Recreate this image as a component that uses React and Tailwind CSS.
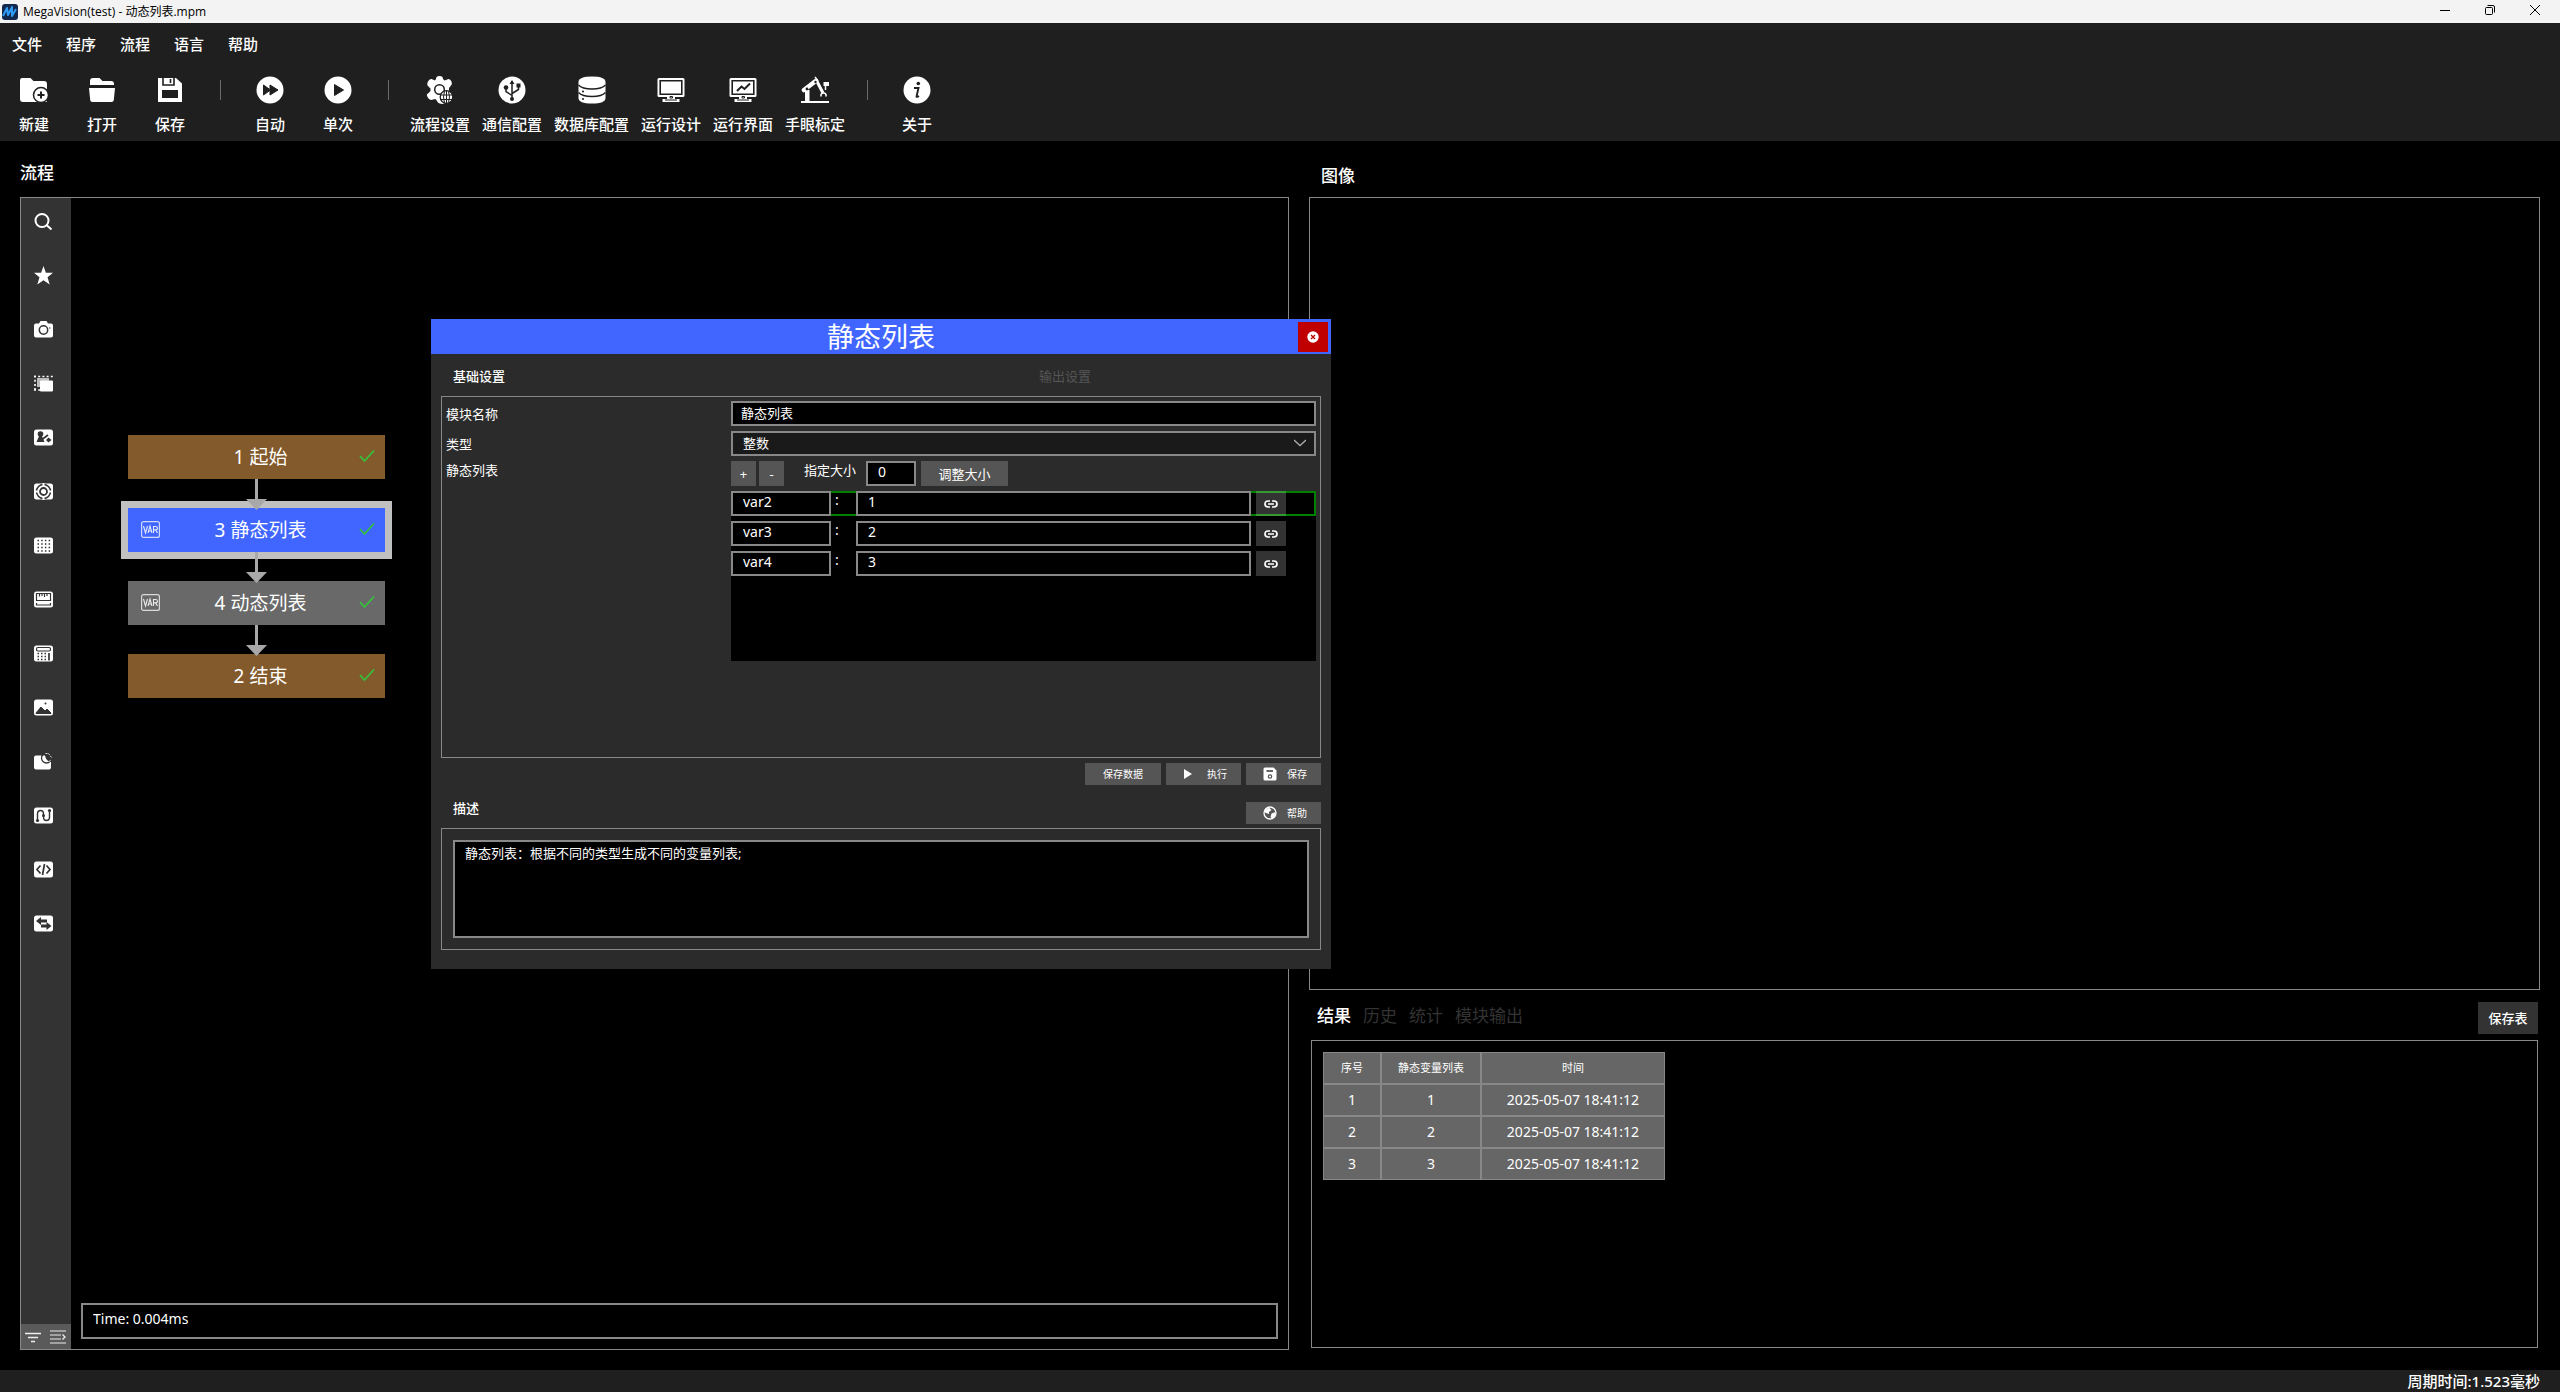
import React, { useState } from 'react';

const Svg = ({ w = 28, h = 28, box, className, children }) => (
  <svg width={w} height={h} viewBox={box || `0 0 ${w} ${h}`} fill="none" className={className} aria-hidden="true">
    {children}
  </svg>
);

// ---- toolbar icons, 28 x 28 ----
const DARK = '#1f1f1f';

const NewIcon = () => (
  <Svg>
    <path d="M2 2h8.500l3 3H24q3 0 3 3v17q0 1-1 1H3q-3 0-3-3V5q0-3 2-3z" fill="#fff" />
    <circle cx="21" cy="19" r="7.500" fill="#fff" stroke={DARK} strokeWidth="1.500" />
    <path d="M21 15.500v7M17.500 19h7" stroke={DARK} strokeWidth="2" />
  </Svg>
);

const OpenIcon = () => (
  <Svg>
    <path d="M2 9V5q0-3 3-3h6.500l3 3H23q3 0 3 3v1z" fill="#fff" />
    <path d="M1 12h26l-1.200 12q-.2 2-2.200 2H4.400q-2 0-2.200-2z" fill="#fff" />
  </Svg>
);

const SaveIcon = () => (
  <Svg>
    <path d="M2 2h18l6 5.500V26H2z" fill="#fff" />
    <path d="M7 2v7h11V2M14.500 3v4" stroke={DARK} strokeWidth="1.600" />
    <path d="M6 14h16v8H6z" fill={DARK} />
  </Svg>
);

const AutoIcon = () => (
  <Svg>
    <circle cx="14" cy="14" r="13.500" fill="#fff" />
    <path d="M7.500 9l7 5-7 5zM14 9l8 5-8 5z" fill={DARK} stroke={DARK} strokeLinejoin="round" />
  </Svg>
);

const OnceIcon = () => (
  <Svg>
    <circle cx="14" cy="14" r="13.500" fill="#fff" />
    <path d="M10.500 8.500l9 5.500-9 5.500z" fill={DARK} stroke={DARK} strokeLinejoin="round" />
  </Svg>
);

const GearIcon = () => (
  <Svg>
    <path d="M10 3q0-3 3.500-3T17 3l1.500 1.500 4-1.500q2 0 3 2.500t-.5 4L23 12v3l3 2-2 7-7 4q-5 0-6-3l-1.500-2L5 24q-2 0-3.500-3T2 17.500L4.500 15v-2.500L2 10q-1.500-1.500 0-4.500T5.500 3L9 4.500z" fill="#fff" />
    <circle cx="13.500" cy="13.500" r="4.800" stroke={DARK} strokeWidth="1.500" />
    <circle cx="20.500" cy="21" r="6.300" fill="#fff" stroke={DARK} strokeWidth="1.300" />
    <path d="M14.500 19h12M14.500 23.500h12M20.500 15v12M18.500 15.500q-2 5.500 0 11M22.500 15.500q2 5.500 0 11" stroke={DARK} strokeWidth="1" />
  </Svg>
);

const UsbIcon = () => (
  <Svg>
    <circle cx="14" cy="14" r="13.500" fill="#fff" />
    <path d="M14 5v18M14 19.500l-6-4V11M14 17.500l6.500-4V9" stroke={DARK} strokeWidth="1.500" />
    <path d="M11.500 8L14 4l2.500 4zM18.500 7.500h4v4h-4z" fill={DARK} />
    <circle cx="8" cy="11.500" r="2.300" fill={DARK} />
    <circle cx="14" cy="23" r="2" fill={DARK} />
  </Svg>
);

const DatabaseIcon = () => (
  <Svg>
    <path d="M.5 6q0-5.500 13.500-5.500T27.500 6v16q0 5.500-13.500 5.500T.5 22z" fill="#fff" />
    <path d="M.5 9q3.500 4 13.500 4t13.500-4M.5 16.500q3.500 4 13.500 4t13.500-4" stroke={DARK} strokeWidth="1.500" />
    <path d="M4 15.500h2M4 23h2" stroke={DARK} strokeWidth="1.500" />
  </Svg>
);

const Screen = ({ children }) => (
  <Svg>
    <path d="M2 2h24q1.500 0 1.500 1.500v16Q27.500 21 26 21H2Q.5 21 .5 19.500v-16Q.5 2 2 2z" fill="#fff" />
    <path d="M3.200 4.700h21.600v13.600H3.200z" stroke={DARK} strokeWidth="1.600" />
    <path d="M10 21h8v2h4.500v3h-17v-3H10z" fill="#fff" />
    <path d="M13 20.500h2.500V22H13zM8 24h12" stroke={DARK} strokeWidth="1" />
    {children}
  </Svg>
);

const DesignIcon = () => <Screen />;

const RuntimeIcon = () => (
  <Screen>
    <path d="M8 15l4.500-4.500 3 2.500L21 7.500" stroke={DARK} strokeWidth="2" />
  </Screen>
);

const RobotIcon = () => (
  <Svg>
    <path d="M0 26h28" stroke="#fff" strokeWidth="2" />
    <path d="M4 25V14h4.500v11z" fill="#fff" />
    <path d="M3 14L14 5.500" stroke="#fff" strokeWidth="4.500" strokeLinecap="round" />
    <path d="M15 3.500L22 17" stroke="#fff" strokeWidth="3" />
    <path d="M14 1l3 4M24.500 9v5" stroke="#fff" strokeWidth="1.500" />
    <path d="M22.500 6h5.500v4h-5.500z" fill="#fff" />
    <path d="M20 20.500q-.5-3.500 2.500-3.500t2.500 3.500" stroke="#fff" strokeWidth="1.600" />
    <circle cx="6" cy="13" r="1.400" fill={DARK} />
    <circle cx="14.500" cy="6" r="1.200" fill={DARK} />
  </Svg>
);

const AboutIcon = () => (
  <Svg>
    <circle cx="14" cy="14" r="13.500" fill="#fff" />
    <circle cx="15.300" cy="7.500" r="1.800" fill={DARK} />
    <path d="M11 12h4.500l-2 8.500q0 1 2.500-.5" stroke={DARK} strokeWidth="1.900" />
  </Svg>
);

// ---- tool strip icons, 19 x 17 ----
const INK = '#333';
const Card = () => <rect width="19" height="16" y=".5" rx="2.500" fill="#fff" />;

const stripIcons = [
  { name: '搜索', art: <><circle cx="8" cy="7.500" r="6.500" stroke="#fff" strokeWidth="2" /><path d="M12.500 12l5 4.500" stroke="#fff" strokeWidth="2" /></> },
  { name: '收藏', art: <path d="M9.500-1l2.400 6.800H19l-5.500 4.500 2.200 7.200-6.200-4.300-6.200 4.300 2.200-7.200L0 5.800h7.100z" fill="#fff" /> },
  { name: '相机', art: <><path d="M6.500 0h6L14 2.500h3q2 0 2 2v10q0 2-2 2H2q-2 0-2-2v-10q0-2 2-2h3z" fill="#fff" /><circle cx="9.500" cy="9" r="4.200" stroke={INK} strokeWidth="1.500" /><path d="M15 7h1.500" stroke={INK} /></> },
  { name: '区域', art: <><path d="M0 1.500h19M0 15h6M1 .5v16" stroke="#fff" strokeWidth="1.600" strokeDasharray="2 2.200" /><rect x="3" y="3" width="12" height="9" fill="#bbb" /><rect x="6" y="5.500" width="13" height="11" rx="1" fill="#fff" /></> },
  { name: '标定', art: <><Card /><circle cx="6.500" cy="5" r="2.800" fill={INK} /><path d="M5.500 6h2l3 7h-8zM14.500 8.500l3 2.500-3 2.500-2.500-2.500z" fill={INK} /><path d="M8 10.500l6-4.500" stroke={INK} strokeWidth="1.600" /></> },
  { name: '定位', art: <><Card /><circle cx="9.500" cy="8.500" r="7" stroke={INK} strokeWidth="1.600" /><circle cx="9.500" cy="8.500" r="3.500" stroke={INK} strokeWidth="1.800" /><path d="M9.500 0v4M9.500 13v4M1 8.500h4M14 8.500h4" stroke="#fff" strokeWidth="2" /></> },
  { name: '网格', art: <><Card /><path d="M3.500 3.500h13M3.500 7h13M3.500 10.500h13M3.500 14h13" stroke={INK} strokeWidth="1.500" strokeDasharray="1.500 2.200" /></> },
  { name: '测量', art: <><Card /><path d="M2.500 2.500h14v7h-14zM2.500 12v2h14v-2" stroke={INK} strokeWidth="1.200" /><path d="M5.500 3v2.500M8 3v2M10.500 3v3M13 3v2" stroke={INK} strokeWidth="1.200" /></> },
  { name: '计算', art: <><Card /><rect x="2.500" y="2.500" width="14" height="3.500" rx="1.500" stroke={INK} strokeWidth="1.200" /><path d="M3.500 8.500h9M3.500 11.500h9M3.500 14.500h9" stroke={INK} strokeWidth="1.500" strokeDasharray="1.500 2" /><path d="M15 8v7.500" stroke={INK} strokeWidth="1.700" /></> },
  { name: '图像', art: <><Card /><path d="M2 14l5-6 4 4 2-2 4 4v.5H2z" fill={INK} stroke={INK} strokeLinejoin="round" /><circle cx="11.500" cy="4.500" r="1" fill={INK} /></> },
  { name: '轮廓', art: <><path d="M2 2.500h9q1 6 6 6v6q0 2-2 2H2q-2 0-2-2v-10q0-2 2-2z" fill="#fff" /><circle cx="12.500" cy="5" r="5" stroke={INK} strokeWidth="1.300" /><path d="M11.500.5h3l3.500 4.500M15 8.500l2-1.500" stroke="#ddd" strokeWidth="1" strokeDasharray="2 1" /></> },
  { name: '路径', art: <><Card /><path d="M3.500 13.500V7q0-3.500 3-3.500t3 3.500v3q0 3.500 3 3.500t3-3.500V4" stroke={INK} strokeWidth="1.400" /><circle cx="3.500" cy="13.500" r="1.600" fill={INK} /><circle cx="9.500" cy="8.500" r="1.500" fill={INK} /><circle cx="15.500" cy="3.500" r="1.600" fill={INK} /></> },
  { name: '脚本', art: <><Card /><path d="M6.500 4.500L3 8.500l3.500 4M12.500 4.500l3.500 4-3.500 4M10.500 3l-2 11" stroke={INK} strokeWidth="1.700" /></> },
  { name: '通讯', art: <><Card /><path d="M2 6l5-4v2.500h6v3H7V10zM17.500 11l-5-4v2.500H7v3h5.500V15z" fill={INK} /></> },
];

const menus = ['文件', '程序', '流程', '语言', '帮助'];

const tools = [
  ['新建', NewIcon], ['打开', OpenIcon], ['保存', SaveIcon], null,
  ['自动', AutoIcon], ['单次', OnceIcon], null,
  ['流程设置', GearIcon], ['通信配置', UsbIcon], ['数据库配置', DatabaseIcon],
  ['运行设计', DesignIcon], ['运行界面', RuntimeIcon], ['手眼标定', RobotIcon], null,
  ['关于', AboutIcon],
];

const nodes = [
  { id: 1, name: '起始', color: 'bg-[#835a2c]' },
  { id: 3, name: '静态列表', color: 'bg-[#4066ff]', isVar: true, selected: true },
  { id: 4, name: '动态列表', color: 'bg-[#696969]', isVar: true },
  { id: 2, name: '结束', color: 'bg-[#835a2c]' },
];

const results = [1, 2, 3].map((n) => [n, n, '2025-05-07 18:41:12']);

const TitleBar = () => (
  <div className="flex h-[23px] shrink-0 items-center bg-[#f3f3f3] pl-0.5 pr-[3px] text-black">
    <Svg w={16} h={16}>
      <rect width="16" height="16" rx="3" fill="#12284c" />
      <path d="M1 12L5 4l1 7 4-8v9l4-7" stroke="#2f9bf5" strokeWidth="2" strokeLinejoin="round" />
    </Svg>
    <h1 className="ml-[5px] grow font-['Open_Sans','Noto_Sans_CJK_SC',sans-serif] text-xs">MegaVision(test) - 动态列表.mpm</h1>
    <div className="flex h-5 self-start">
      <button aria-label="最小化" className="flex w-[45px] items-center justify-center">
        <Svg w={10} h={10}><path d="M0 5.500h10" stroke="#000" /></Svg>
      </button>
      <button aria-label="还原" className="flex w-[45px] items-center justify-center">
        <Svg w={10} h={10}><rect x=".5" y="2.500" width="7" height="7" rx="1" stroke="#000" /><path d="M2.500.5H8q1.500 0 1.500 1.500v5.500" stroke="#000" /></Svg>
      </button>
      <button aria-label="关闭" className="flex w-[45px] items-center justify-center">
        <Svg w={10} h={10}><path d="M0 0l10 10M10 0L0 10" stroke="#000" /></Svg>
      </button>
    </div>
  </div>
);

const Header = () => (
  <header className="shrink-0 bg-[#1f1f1f] text-[15px] font-medium">
    <nav className="flex h-[45px] items-center gap-6 pb-0.5 pl-3">
      {menus.map((m) => <button key={m}>{m}</button>)}
    </nav>
    <div className="flex h-[73px] pt-2">
      {tools.map((tool, i) => {
        if (!tool) {
          return (
            <span key={i} className="flex w-8 justify-center pt-1">
              <span className="h-5 w-px bg-[#6a6a6a]" />
            </span>
          );
        }
        const [label, Icon] = tool;
        return (
          <button key={label} className="flex min-w-[68px] flex-col items-center gap-2 px-1.5">
            <Icon />
            <span className="leading-6">{label}</span>
          </button>
        );
      })}
    </div>
  </header>
);

const ToolStrip = () => (
  <div className="flex w-[50px] shrink-0 flex-col bg-[#333]">
    <div className="flex grow flex-col gap-2">
      {stripIcons.map((icon) => (
        <button key={icon.name} aria-label={icon.name} className="flex h-[46px] items-center pl-[13px]">
          <Svg w={19} h={17} className="overflow-visible">{icon.art}</Svg>
        </button>
      ))}
    </div>
    <div className="flex h-[25px] bg-[#5a5a5a]">
      <button aria-label="筛选" className="flex flex-1 items-center pl-1">
        <Svg w={16} h={12}><path d="M0 2.500h16M3 6.500h10M6 10.500h4" stroke="#eee" strokeWidth="1.600" /></Svg>
      </button>
      <button aria-label="展开" className="flex flex-1 items-center pl-1">
        <Svg w={16} h={14}><path d="M0 1h16M0 5h11M0 9h11M0 13h16" stroke="#bbb" strokeWidth="1.500" /><path d="M12.500 4.500L15 7l-2.500 2.500" stroke="#eee" strokeWidth="1.300" /></Svg>
      </button>
    </div>
  </div>
);

const FlowNode = ({ node, last }) => (
  <div className={`relative flex h-11 w-[257px] items-center justify-center pl-2 text-[19px] ${node.color} ${node.selected ? 'ring-[7px] ring-[#c0c0c0]' : ''}`}>
    {node.isVar && (
      <Svg w={19} h={17} className="absolute left-[13px] top-[13px]">
        <rect x=".6" y=".6" width="17.800" height="15.800" rx="2" stroke="#fff" strokeOpacity=".75" strokeWidth="1.200" />
        <path d="M2.500 5l2 7 2-7M7 12l2-7 2 7M7.800 10h2.500M12.500 12V5.500h2q2 0 2 1.700t-2 1.700h-2m2 0l2 3" stroke="#fff" strokeOpacity=".85" strokeWidth="1.100" />
      </Svg>
    )}
    <span>{node.id} {node.name}</span>
    <Svg w={16} h={14} className="absolute right-2.5 top-3.5"><path d="M1 7l4.500 5L15 1.500" stroke="#34c13c" strokeWidth="1.800" /></Svg>
    {!last && (
      <Svg w={21} h={31} className="absolute left-[118px] top-full z-10">
        <path d="M9 0h3v20h9L10.500 31 0 20h9z" fill="#a8a8a8" />
      </Svg>
    )}
  </div>
);

const FlowPanel = () => (
  <section className="flex flex-col">
    <h2 className="flex h-14 shrink-0 items-center pt-2 text-[17px] font-medium">流程</h2>
    <div className="flex grow border border-[#888]">
      <ToolStrip />
      <div className="flex grow flex-col px-2.5 pb-2.5">
        <div className="flex grow flex-col gap-[29px] pl-[47px] pt-[237px]">
          {nodes.map((n, i) => <FlowNode key={n.id} node={n} last={i === nodes.length - 1} />)}
        </div>
        <input aria-label="运行时间" readOnly value="Time: 0.004ms" className="h-9 border-2 border-[#888] bg-black px-2.5 pb-1.5 text-sm" />
      </div>
    </div>
  </section>
);

const ResultTable = () => (
  <table className="m-[11px] border-separate border-spacing-0 bg-[#666] text-center text-sm">
    <thead>
      <tr className="h-8 text-[11px]">
        <th className="w-[58px] border border-[#888] font-normal">序号</th>
        <th className="w-[100px] border border-[#888] font-normal">静态变量列表</th>
        <th className="w-[184px] border border-[#888] font-normal">时间</th>
      </tr>
    </thead>
    <tbody>
      {results.map((row) => (
        <tr key={row[0]} className="h-8">
          {row.map((cell, i) => <td key={i} className="border border-[#888]">{cell}</td>)}
        </tr>
      ))}
    </tbody>
  </table>
);

const RightPanel = () => {
  const [tab, setTab] = useState('结果');

  return (
    <section className="flex flex-col">
      <h2 className="flex h-14 shrink-0 items-center pl-3 pt-3.5 text-[17px] font-medium">图像</h2>
      <div className="grow border border-[#888]" />
      <div className="flex h-[50px] shrink-0 items-start gap-3 pl-2 pr-0.5 pt-3 text-[17px] leading-7">
        {['结果', '历史', '统计', '模块输出'].map((t) => (
          <button key={t} onClick={() => setTab(t)} className={t === tab ? 'font-medium text-white' : 'text-[#333]'}>{t}</button>
        ))}
        <button className="ml-auto h-8 w-[60px] bg-[#333] text-[13px] font-medium">保存表</button>
      </div>
      <div className="mx-0.5 mb-0.5 h-[308px] shrink-0 border border-[#888]">
        <ResultTable />
      </div>
    </section>
  );
};

const SmallButton = ({ icon, children }) => (
  <button className={`flex h-[22px] items-center bg-[#555] text-[10px] ${icon ? 'w-[75px] justify-end gap-2.5 pr-3.5' : 'w-[76px] justify-center'}`}>
    {icon}
    {children}
  </button>
);

const ModuleDialog = () => {
  const [name, setName] = useState('静态列表');
  const [size, setSize] = useState('0');
  const [vars, setVars] = useState([
    { name: 'var2', value: '1' },
    { name: 'var3', value: '2' },
    { name: 'var4', value: '3' },
  ]);

  const update = (i, key, value) => setVars(vars.map((v, n) => (n === i ? { ...v, [key]: value } : v)));

  return (
    <div role="dialog" aria-label="静态列表" className="absolute left-[431px] top-[319px] z-20 w-[900px] bg-[#2b2b2b] text-[13px]">
      <div className="relative flex h-[35px] items-center justify-center bg-[#4066ff]">
        <h2 className="text-[27px] leading-[35px]">静态列表</h2>
        <button aria-label="关闭" className="absolute right-[3px] top-[3px] flex h-[30px] w-[30px] items-center justify-center bg-[#c00000]">
          <Svg w={12} h={12}><circle cx="6" cy="6" r="5.700" fill="#fff" /><path d="M4 4l4 4M8 4L4 8" stroke="#c00000" strokeWidth="1.300" /></Svg>
        </button>
      </div>

      <div className="px-2.5 pb-[19px]">
        <div className="flex h-[42px] pt-1">
          <button className="w-[586px] px-3 text-left font-medium">基础设置</button>
          <button className="px-3 text-[#555]">输出设置</button>
        </div>

        <div className="grid h-[362px] grid-cols-[285px_1fr] content-start gap-y-[5px] border border-[#888] p-1 leading-[18px]">
          <label htmlFor="module-name" className="self-center">模块名称</label>
          <input id="module-name" value={name} onChange={(e) => setName(e.target.value)} className="h-[25px] border-2 border-[#888] bg-black px-2 pb-0.5" />

          <label htmlFor="module-type" className="self-center">类型</label>
          <div className="relative">
            <select id="module-type" className="h-[25px] w-full appearance-none border-2 border-[#888] bg-[#1a1a1a] px-2.5 pb-0.5">
              <option>整数</option>
            </select>
            <Svg w={12} h={8} className="pointer-events-none absolute right-2.5 top-2"><path d="M0 1l6 5.500L12 1" stroke="#aaa" strokeWidth="1.300" /></Svg>
          </div>

          <span>静态列表</span>
          <div>
            <div className="flex h-[25px]">
              <button className="w-[25px] bg-[#555]" onClick={() => setVars([...vars, { name: `var${vars.length + 2}`, value: '0' }])}>+</button>
              <button className="ml-[3px] w-[25px] bg-[#555]" onClick={() => setVars(vars.slice(0, -1))}>-</button>
              <label htmlFor="list-size" className="ml-5">指定大小</label>
              <input id="list-size" value={size} onChange={(e) => setSize(e.target.value)} className="ml-2.5 w-[50px] border-2 border-[#888] bg-black px-2.5 pb-1 text-sm" />
              <button className="ml-[5px] w-[87px] bg-[#555]">调整大小</button>
            </div>
            <div className="mt-[5px] flex h-[170px] flex-col gap-[5px] bg-black text-sm">
              {vars.map((v, i) => (
                <div key={i} className={`flex h-[25px] pr-[30px] ${i === 0 ? 'ring-2 ring-inset ring-[#008000]' : ''}`}>
                  <input aria-label="变量名" value={v.name} onChange={(e) => update(i, 'name', e.target.value)} className="w-[100px] border-2 border-[#888] bg-black px-2.5 pb-1" />
                  <span className="w-[25px] pl-1 leading-[18px]">:</span>
                  <input aria-label="变量值" value={v.value} onChange={(e) => update(i, 'value', e.target.value)} className="grow border-2 border-[#888] bg-black px-2.5 pb-1" />
                  <button aria-label="链接" className="ml-[5px] flex w-[30px] items-center justify-center bg-white/20">
                    <Svg w={14} h={8}><path d="M6 1H4Q1 1 1 4t3 3h2M8 1h2q3 0 3 3t-3 3H8M4 4h6" stroke="#fff" strokeWidth="1.700" /></Svg>
                  </button>
                </div>
              ))}
            </div>
          </div>
        </div>

        <div className="flex justify-end gap-[5px] pt-[5px]">
          <SmallButton>保存数据</SmallButton>
          <SmallButton icon={<Svg w={14} h={12}><path d="M1 1l8 5-8 5z" fill="#fff" /></Svg>}>执行</SmallButton>
          <SmallButton icon={<Svg w={14} h={14}><path d="M2 .5h8.500l3 3v8.500q0 1.500-1.500 1.500H2Q.5 13.500.5 12V2Q.5.500 2 .5z" fill="#fff" /><path d="M3.500 4H10" stroke="#555" strokeWidth="1.800" /><circle cx="7" cy="9.500" r="1.700" stroke="#555" strokeWidth="1.200" /></Svg>}>保存</SmallButton>
        </div>

        <div className="flex h-[43px] items-end justify-between pb-1 pl-3">
          <label htmlFor="module-desc" className="font-medium leading-8">描述</label>
          <SmallButton icon={<Svg w={14} h={14}><circle cx="7" cy="7" r="6" stroke="#fff" strokeWidth="1.300" /><path d="M2 4l4-2.500L8.500 4 6 6v2L3 7 1 6zM8.500 7.500l4-1.500v3L9 12.500 7.500 11z" fill="#fff" /></Svg>}>帮助</SmallButton>
        </div>
        <div className="flex border border-[#888] p-[11px]">
          <textarea id="module-desc" readOnly value="静态列表：根据不同的类型生成不同的变量列表;" className="h-[98px] grow resize-none border-2 border-[#888] bg-black px-2.5 py-0.5 leading-[18px]" />
        </div>
      </div>
    </div>
  );
};

export default function App() {
  return (
    <div className="relative flex h-screen flex-col bg-black font-['Noto_Sans','Noto_Sans_CJK_SC',sans-serif] text-white">
      <TitleBar />
      <Header />
      <main className="grid grow grid-cols-[1269fr_1231fr] gap-5 px-5 pb-5">
        <FlowPanel />
        <RightPanel />
      </main>
      <footer className="flex h-[22px] shrink-0 items-center justify-end bg-[#1f1f1f] pr-5 text-[15px] font-medium">周期时间:1.523毫秒</footer>
      <ModuleDialog />
    </div>
  );
}
